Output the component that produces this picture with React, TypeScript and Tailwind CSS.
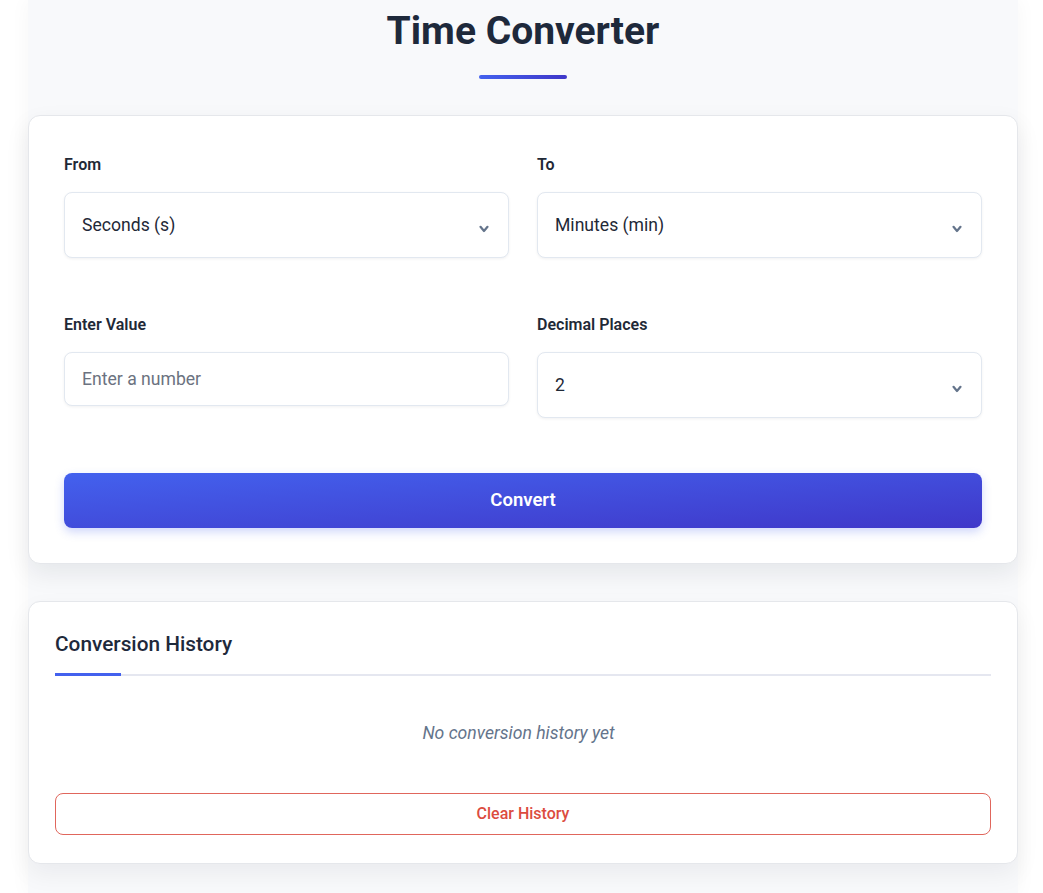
import React from "react";

function Chevron() {
  return (
    <svg width="10" height="8" viewBox="0 0 10 8" className="absolute right-[19px] top-1/2 mt-[4px] -translate-y-1/2" fill="none">
      <path d="M1.5 1.8 L5 6 L8.5 1.8" stroke="#64748b" strokeWidth="2.2" strokeLinecap="round" strokeLinejoin="round" />
    </svg>
  );
}

function SelectBox({ value }: { value: string }) {
  return (
    <div className="relative flex h-[66px] items-center rounded-lg border border-[#e2e8f0] bg-white pl-[17px] text-[17.6px] text-[#1f2937] shadow-[0_1px_3px_rgba(15,23,42,0.06)]">
      <span>{value}</span>
      <Chevron />
    </div>
  );
}

function Label({ children }: { children: React.ReactNode }) {
  return (
    <div className="mb-[16px] text-[16px] font-semibold leading-[22px] text-[#1f2937]">{children}</div>
  );
}

export default function App() {
  return (
    <div className="min-h-[893px] bg-white font-['Roboto',sans-serif]">
      <div className="ml-[28px] min-h-[893px] w-[990px] bg-[#f8f9fb] pb-[30px] pt-[9px] shadow-[0_0_20px_rgba(15,23,42,0.04)]">
        <div className="flex flex-col items-center">
          <h1 className="text-[39px] font-bold leading-[44px] text-[#1e293b]">Time Converter</h1>
          <div className="mt-[22px] h-[4px] w-[88px] rounded-full bg-gradient-to-r from-[#4361ee] to-[#3f37c9]" />
        </div>

        <div className="mt-[36px] rounded-xl border border-[#e5e7eb] bg-white px-[35px] pb-[35px] pt-[38px] shadow-[0_10px_25px_rgba(15,23,42,0.08)]">
          <div className="grid grid-cols-2 gap-x-[28px]">
            <div>
              <Label>From</Label>
              <SelectBox value="Seconds (s)" />
            </div>
            <div>
              <Label>To</Label>
              <SelectBox value="Minutes (min)" />
            </div>
          </div>
          <div className="mt-[56px] grid grid-cols-2 items-start gap-x-[28px]">
            <div>
              <Label>Enter Value</Label>
              <div className="flex h-[54px] items-center rounded-lg border border-[#e2e8f0] bg-white pl-[17px] text-[17.6px] text-[#6b7280] shadow-[0_1px_3px_rgba(15,23,42,0.06)]">
                Enter a number
              </div>
            </div>
            <div>
              <Label>Decimal Places</Label>
              <SelectBox value="2" />
            </div>
          </div>
          <button className="mt-[55px] flex h-[55px] w-full items-center justify-center rounded-lg bg-gradient-to-br from-[#4361ee] to-[#3f37c9] text-[18.5px] font-semibold text-white shadow-[0_4px_10px_rgba(67,97,238,0.25)]">
            Convert
          </button>
        </div>

        <div className="mt-[37px] rounded-xl border border-[#e5e7eb] bg-white px-[26px] pb-[28px] pt-[27px] shadow-[0_10px_25px_rgba(15,23,42,0.06)]">
          <div className="relative border-b-2 border-[#e5e7f0] pb-[15px]">
            <h2 className="text-[20.8px] font-medium leading-[30px] text-[#1e293b]">Conversion History</h2>
            <div className="absolute bottom-[-2px] left-0 h-[3px] w-[66px] bg-[#4361ee]" />
          </div>
          <p className="mt-[44px] pr-[9px] text-center text-[17.6px] italic leading-[26px] text-[#64748b]">No conversion history yet</p>
          <button className="mt-[47px] flex h-[42px] w-full items-center justify-center rounded-lg border border-[#e0665c] bg-white text-[16px] font-medium text-[#dc4c3f]">
            Clear History
          </button>
        </div>
      </div>
    </div>
  );
}
